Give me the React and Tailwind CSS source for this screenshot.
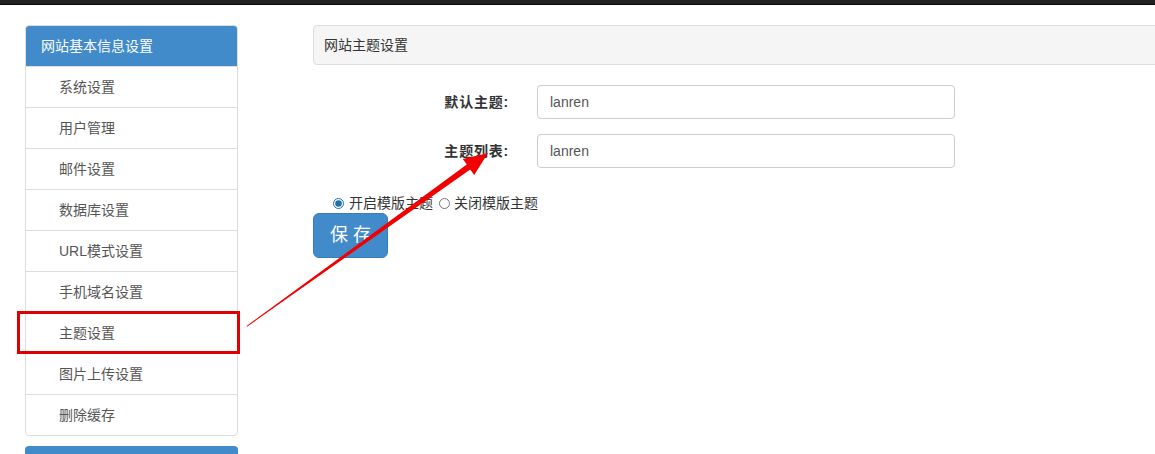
import React from "react";

const menu = [
  "系统设置",
  "用户管理",
  "邮件设置",
  "数据库设置",
  "URL模式设置",
  "手机域名设置",
  "主题设置",
  "图片上传设置",
  "删除缓存",
];

function FormRow({ label, value }) {
  return (
    <div className="flex items-center">
      <label className="w-[210px] pr-[14px] text-right text-[14px] font-bold tracking-[0.8px] text-[#333]">
        {label}
      </label>
      <div className="ml-[14px] flex h-[34px] w-[418px] items-center rounded-[4px] border border-[#ccc] bg-white px-[12px] text-[14px] text-[#555]">
        {value}
      </div>
    </div>
  );
}

export default function App() {
  return (
    <div
      className="relative h-[454px] w-[1155px] overflow-hidden bg-white"
      style={{ fontFamily: '"Liberation Sans", "Noto Sans CJK SC", sans-serif' }}
    >
      <div className="h-[5px] border-b border-[#080808] bg-[#222]" />

      <div className="flex pt-[20px]">
        {/* sidebar */}
        <div className="ml-[25px] w-[213px] shrink-0">
          <div className="overflow-hidden rounded-[4px] border border-[#ddd]">
            <div className="flex h-[40px] items-center bg-[#428bca] px-[15px] text-[14px] text-white">
              网站基本信息设置
            </div>
            {menu.map((item) => (
              <div
                key={item}
                className="flex h-[41px] items-center border-t border-[#ddd] pl-[33px] text-[14px] text-[#555]"
              >
                {item}
              </div>
            ))}
          </div>
          <div className="mt-[10px] h-[30px] rounded-t-[4px] bg-[#428bca]" />
        </div>

        {/* content */}
        <div className="ml-[75px] w-[900px] shrink-0">
          <div className="flex h-[40px] items-center rounded-[4px] border border-[#ddd] bg-[#f5f5f5] px-[10px] text-[14px] text-[#333]">
            网站主题设置
          </div>

          <div className="mt-[20px] flex flex-col gap-[15px]">
            <FormRow label="默认主题:" value="lanren" />
            <FormRow label="主题列表:" value="lanren" />
          </div>

          <div className="mt-[25px] flex h-[20px] items-center pl-[20px] text-[14px] text-[#333]">
            <input type="radio" name="tpl" defaultChecked className="m-0 mr-[5px] h-[11px] w-[11px] accent-[#1f6fa8]" />
            <span>开启模版主题</span>
            <input type="radio" name="tpl" className="m-0 ml-[6px] mr-[4px] h-[11px] w-[11px]" />
            <span>关闭模版主题</span>
          </div>

          <button className="h-[45px] w-[75px] rounded-[6px] border border-[#357ebd] bg-[#428bca] text-[18px] text-white">
            保 存
          </button>
        </div>
      </div>

      {/* annotation overlay */}
      <div className="pointer-events-none absolute left-[17px] top-[311px] h-[43px] w-[223px] border-[3px] border-[#e00000]" />
      <svg className="pointer-events-none absolute left-0 top-0" width="1155" height="454">
        <polygon
          points="247,326.8 470.2,169.4 474.2,175 488,153 462.8,159 466.8,164.6 246.6,326"
          fill="#f00000"
        />
      </svg>
    </div>
  );
}
